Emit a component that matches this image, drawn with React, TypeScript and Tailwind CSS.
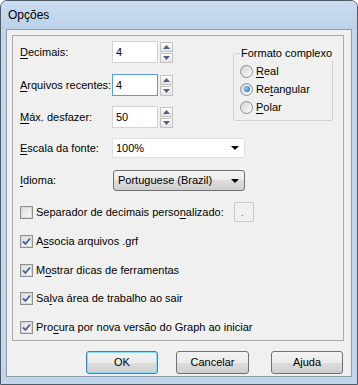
import React from "react";

const U = ({ c }: { c: string }) => (
  <span className="underline decoration-1 underline-offset-[2px]">{c}</span>
);

function Check({ checked }: { checked?: boolean }) {
  return (
    <span className="w-[13px] h-[13px] border border-[#8e8f8f] bg-white flex items-center justify-center shrink-0">
      <span className="w-[11px] h-[11px] border border-[#d8d8d8] bg-linear-to-br from-[#dcdcdc] to-[#fbfbfb] flex items-center justify-center">
        {checked && (
          <svg width="9" height="9" viewBox="0 0 9 9">
            <path d="M1 4.5 L3.5 7 L8 1.5" stroke="#4a5f97" strokeWidth="1.8" fill="none" />
          </svg>
        )}
      </span>
    </span>
  );
}

function Radio({ checked }: { checked?: boolean }) {
  return (
    <span className="w-[13px] h-[13px] rounded-full border border-[#8e8f8f] bg-linear-to-br from-[#d4d4d4] to-[#fbfbfb] flex items-center justify-center shrink-0">
      {checked && (
        <span className="w-[6px] h-[6px] rounded-full bg-[radial-gradient(circle_at_35%_35%,#8fd0ff,#1560b8)]" />
      )}
    </span>
  );
}

function Spin() {
  const btn =
    "w-[13px] h-[10px] border border-[#c3c3c3] bg-linear-to-b from-[#fcfcfc] to-[#e4e4e4] flex items-center justify-center";
  return (
    <div className="flex flex-col gap-[1px] ml-[2px]">
      <div className={btn}>
        <svg width="7" height="4" viewBox="0 0 7 4">
          <path d="M0 4 L3.5 0 L7 4 Z" fill="#4d6185" />
        </svg>
      </div>
      <div className={btn}>
        <svg width="7" height="4" viewBox="0 0 7 4">
          <path d="M0 0 L7 0 L3.5 4 Z" fill="#4d6185" />
        </svg>
      </div>
    </div>
  );
}

function NumRow({
  label,
  value,
  focused,
  mt,
}: {
  label: React.ReactNode;
  value: string;
  focused?: boolean;
  mt: string;
}) {
  return (
    <div className={`flex items-center h-[22px] ${mt}`}>
      <div className="w-[92px] whitespace-nowrap">{label}</div>
      <div
        className={`w-[46px] h-[22px] bg-white border flex items-center pl-[3px] ${
          focused ? "border-[#5b9bd5]" : "border-[#d3d3d3]"
        }`}
      >
        {value}
      </div>
      <Spin />
    </div>
  );
}

function Btn({ label, def, cls }: { label: string; def?: boolean; cls: string }) {
  return (
    <div
      className={`h-[23px] rounded-[3px] border flex items-center justify-center bg-[linear-gradient(#f2f2f2,#ebebeb_50%,#dddddd_50%,#cfcfcf)] ${
        def ? "border-[#3c7fb1] shadow-[inset_0_0_0_1px_#8fdcf8]" : "border-[#707070]"
      } ${cls}`}
    >
      {label}
    </div>
  );
}

function CheckRow({
  checked,
  children,
  mt,
}: {
  checked?: boolean;
  children: React.ReactNode;
  mt: string;
}) {
  return (
    <div className={`flex items-center h-[20px] ${mt}`}>
      <Check checked={checked} />
      <span className="ml-[3px] whitespace-nowrap">{children}</span>
    </div>
  );
}

export default function App() {
  return (
    <div className="w-[358px] h-[385px] font-['Liberation_Sans',Arial,sans-serif] text-[11px] text-black leading-[13px]">
      <div className="w-full h-full rounded-t-[7px] border border-[#4f5a67] bg-[#c1d5eb] flex flex-col">
        <div className="h-[28px] flex items-center pl-[7px] text-[12px] rounded-t-[6px] bg-linear-to-b from-[#cadcf0] to-[#bcd1e9]">
          Opções
        </div>
        <div className="mx-[5px] border border-[#8d9fb5] bg-[#f0f0f0] h-[348px] flex flex-col">
          <div className="ml-[5px] mt-[5px] w-[332px] h-[306px] border border-[#a9a9a9] flex flex-col">
            <div className="flex">
              <div className="pl-[7px] pt-[5px] flex flex-col">
                <NumRow mt="" label={<><U c="D" />ecimais:</>} value="4" />
                <NumRow mt="mt-[11px]" label={<><U c="A" />rquivos recentes:</>} value="4" focused />
                <NumRow mt="mt-[10px]" label={<><U c="M" />áx. desfazer:</>} value="50" />
              </div>
              <div className="relative ml-[60px] mt-[17px] w-[100px] h-[68px] border border-[#d0d0d0] rounded-[3px] pl-[6px] pt-[8px]">
                <span className="absolute left-[6px] top-[-7px] px-[1px] bg-[#f0f0f0] whitespace-nowrap">
                  Formato complexo
                </span>
                <div className="flex items-center h-[18px]">
                  <Radio />
                  <span className="ml-[3px]"><U c="R" />eal</span>
                </div>
                <div className="flex items-center h-[18px]">
                  <Radio checked />
                  <span className="ml-[3px]">Re<U c="t" />angular</span>
                </div>
                <div className="flex items-center h-[18px]">
                  <Radio />
                  <span className="ml-[3px]"><U c="P" />olar</span>
                </div>
              </div>
            </div>
            <div className="pl-[7px] flex flex-col">
              <div className="flex items-center h-[20px] mt-[10px]">
                <div className="w-[92px]"><U c="E" />scala da fonte:</div>
                <div className="w-[133px] h-[20px] bg-white border border-[#e0e0e0] flex items-center pl-[3px] pr-[5px]">
                  <span className="flex-1">100%</span>
                  <svg width="8" height="4" viewBox="0 0 8 4">
                    <path d="M0 0 L8 0 L4 4 Z" fill="#000" />
                  </svg>
                </div>
              </div>
              <div className="flex items-center h-[21px] mt-[12px]">
                <div className="w-[93px]"><U c="I" />dioma:</div>
                <div className="w-[132px] h-[21px] rounded-[3px] border border-[#707070] bg-[linear-gradient(#f2f2f2,#ebebeb_50%,#dddddd_50%,#cfcfcf)] flex items-center pl-[4px] pr-[5px]">
                  <span className="flex-1">Portuguese (Brazil)</span>
                  <svg width="8" height="4" viewBox="0 0 8 4">
                    <path d="M0 0 L8 0 L4 4 Z" fill="#000" />
                  </svg>
                </div>
              </div>
              <div className="flex items-center h-[20px] mt-[11px]">
                <Check />
                <span className="ml-[3px] whitespace-nowrap">Separador de decimais perso<U c="n" />alizado:</span>
                <div className="ml-[10px] w-[20px] h-[20px] bg-[#f0f0f0] border border-[#c8c8c8] rounded-[2px] flex items-center pl-[6px] text-[#777]">
                  .
                </div>
              </div>
              <CheckRow checked mt="mt-[9px]">
                A<U c="s" />socia arquivos .grf
              </CheckRow>
              <CheckRow checked mt="mt-[9px]">
                M<U c="o" />strar dicas de ferramentas
              </CheckRow>
              <CheckRow checked mt="mt-[8px]">
                Sa<U c="l" />va área de trabalho ao sair
              </CheckRow>
              <CheckRow checked mt="mt-[9px]">
                Pro<U c="c" />ura por nova versão do Graph ao iniciar
              </CheckRow>
            </div>
          </div>
          <div className="flex mt-[10px]">
            <Btn label="OK" def cls="ml-[79px] w-[72px]" />
            <Btn label="Cancelar" cls="ml-[18px] w-[73px]" />
            <Btn label="Ajuda" cls="ml-[22px] w-[72px]" />
          </div>
        </div>
      </div>
    </div>
  );
}
